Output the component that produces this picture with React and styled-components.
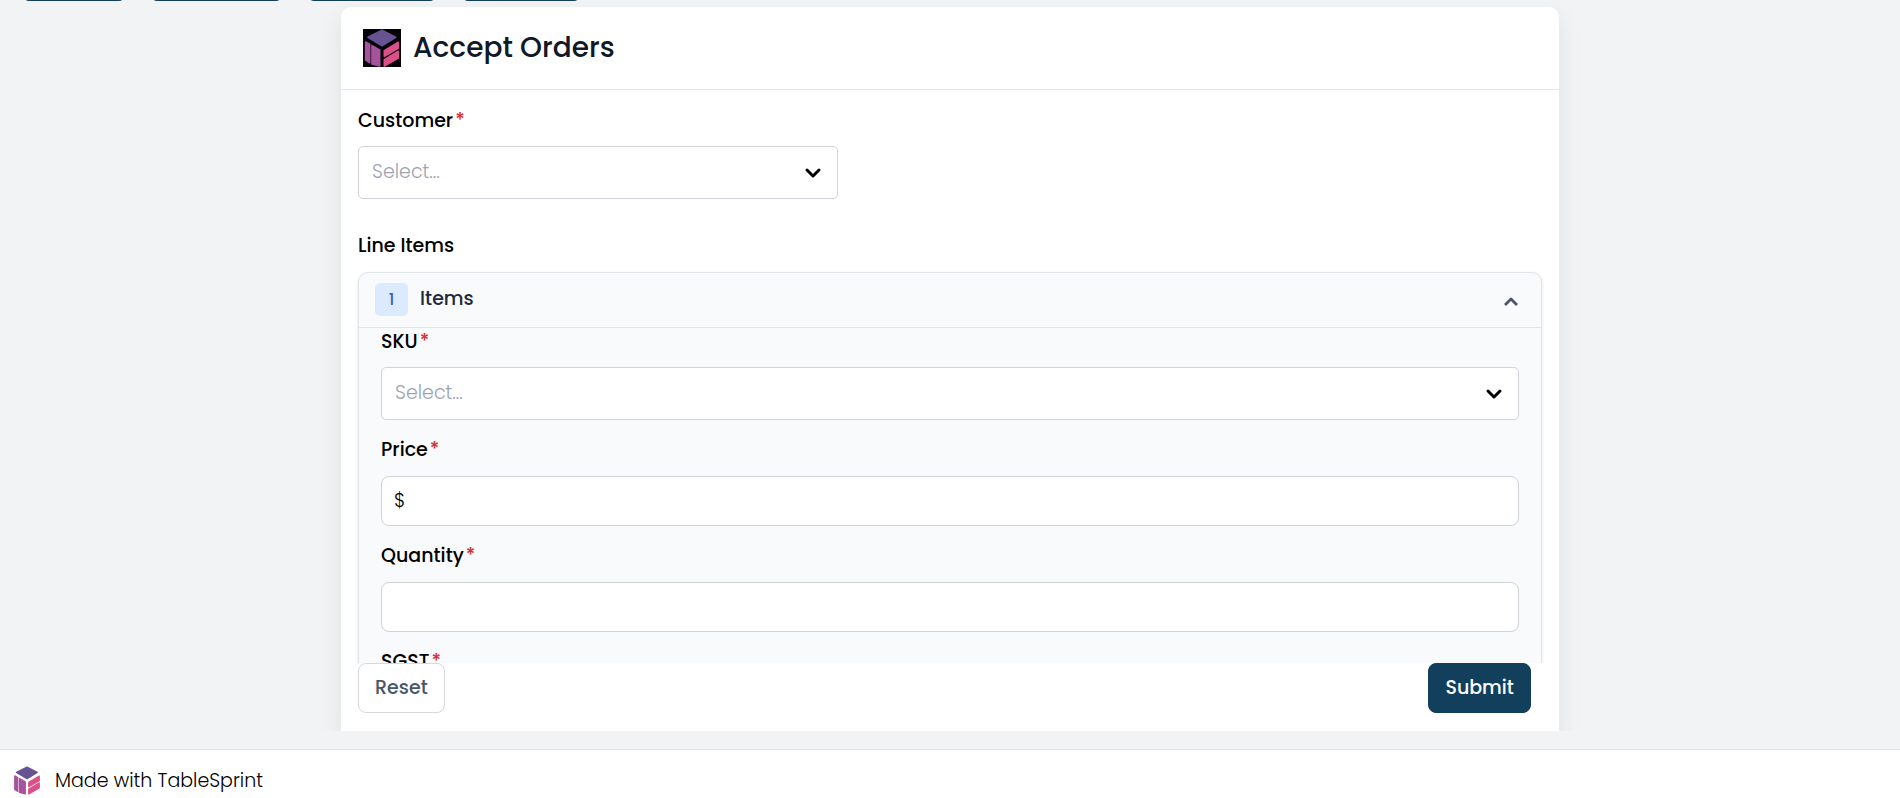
import React, { useState } from "react";
import styled, { createGlobalStyle } from "styled-components";

const GlobalStyle = createGlobalStyle`
  *, *::before, *::after { box-sizing: border-box; }
  body {
    margin: 0;
    background: #f2f3f5;
    color: #000;
    font-family: Poppins, Inter, "Liberation Sans", sans-serif;
    font-size: 19px;
    line-height: 24px;
  }
  button, input, select { font: inherit; }
`;

const Page = styled.div`
  display: flex;
  flex-direction: column;
  height: 100vh;
  overflow: hidden;
`;

const TabStrip = styled.div`
  display: flex;
  flex: none;
  align-items: flex-end;
  gap: 26px;
  height: 1px;
  padding-left: 23px;
  overflow: hidden;
`;

const Tab = styled.span`
  flex: none;
  width: ${(p) => p.$width}px;
  height: 40px;
  border-radius: 6px;
  background: #123f5c;
`;

const Main = styled.main`
  display: flex;
  flex: 1;
  justify-content: center;
  min-height: 0;
  margin-bottom: 18px;
  padding-top: 6px;
  overflow: hidden;
`;

const Card = styled.form`
  display: flex;
  flex-direction: column;
  width: 64.1%;
  background: #fff;
  border-radius: 10px 10px 0 0;
  box-shadow: 0 10px 24px rgba(0, 0, 0, 0.08);
`;

const CardHeader = styled.header`
  display: flex;
  flex: none;
  align-items: center;
  gap: 12px;
  height: 83px;
  padding: 0 22px;
  border-bottom: 1px solid #e5e7eb;
`;

const Title = styled.h1`
  margin: 0;
  color: #111827;
  font-size: 28px;
  font-weight: 500;
  line-height: 36px;
`;

const Scroller = styled.div`
  flex: 1;
  min-height: 0;
  padding: 19px 17px 0;
  overflow: hidden;
`;

const Field = styled.div`
  display: flex;
  flex-direction: column;
  gap: ${(p) => p.$gap}px;
  width: ${(p) => p.$width || "100%"};
`;

const Label = styled.label`
  font-weight: 500;
`;

const SectionTitle = styled.h2`
  margin: 35px 0 14px;
  font-size: 19px;
  font-weight: 500;
  line-height: 24px;
`;

const Star = styled.span`
  margin-left: 2px;
  color: #d32f2f;
`;

const SelectBox = styled.div`
  display: grid;
  align-items: center;

  > * { grid-area: 1 / 1; }
  > svg {
    justify-self: end;
    margin-right: 16px;
    pointer-events: none;
  }
`;

const Select = styled.select`
  width: 100%;
  height: 53px;
  padding: 0 13px 2px;
  border: 1px solid #cfd2d8;
  border-radius: 5px;
  background: #fff;
  color: #9ca3af;
  font-weight: 300;
  appearance: none;
`;

const InputBox = styled.div`
  display: flex;
  align-items: center;
  height: 50px;
  padding: 0 12px;
  border: 1px solid #cfd2d8;
  border-radius: 8px;
  background: #fff;
  font-weight: 300;
`;

const Input = styled.input`
  flex: 1;
  min-width: 0;
  border: 0;
  outline: 0;
  background: transparent;
`;

const Accordion = styled.section`
  border: 1px solid #e2e4e9;
  border-radius: 10px;
  background: #f9fafc;
  box-shadow: 0 1px 3px rgba(0, 0, 0, 0.12);
`;

const AccordionHeader = styled.button`
  display: flex;
  align-items: center;
  width: 100%;
  height: 55px;
  padding: 0 21px 2px 16px;
  border: 0;
  border-bottom: 1px solid #e2e4e9;
  background: transparent;
  color: #1f2937;
  text-align: left;

  > svg { margin-top: 6px; }
`;

const Count = styled.span`
  width: 33px;
  margin-right: 12px;
  border-radius: 5px;
  background: #dbeafe;
  color: #3b5fc4;
  font-size: 16px;
  font-weight: 500;
  line-height: 33px;
  text-align: center;
`;

const AccordionTitle = styled.span`
  flex: 1;
  font-weight: 500;
`;

const AccordionBody = styled.div`
  display: flex;
  flex-direction: column;
  gap: 18px;
  padding: 2px 22px 24px;
`;

const Actions = styled.div`
  display: flex;
  flex: none;
  align-items: flex-start;
  justify-content: space-between;
  height: 68px;
  padding: 0 28px 0 17px;
`;

const Button = styled.button`
  height: 50px;
  padding: 0 16px;
  border: 1px solid ${(p) => (p.$primary ? "#123f5c" : "#d5d8dd")};
  border-radius: 8px;
  background: ${(p) => (p.$primary ? "#123f5c" : "#fff")};
  color: ${(p) => (p.$primary ? "#fff" : "#4b5563")};
  font-weight: 500;
`;

const Footer = styled.footer`
  flex: none;
  height: 49px;
  padding: 16px 14px 0;
  border-top: 1px solid #e2e4e8;
  background: #fff;
`;

const FooterLink = styled.a`
  display: flex;
  align-items: center;
  gap: 15px;
  color: #000;
  font-weight: 300;
  text-decoration: none;
`;

function Cube({ boxed }) {
  return (
    <svg
      width={boxed ? 38 : 26}
      height={boxed ? 38 : 29}
      viewBox={boxed ? "0 0 114 114" : "5 0 104 115"}
      aria-hidden="true"
    >
      {boxed && <rect width="114" height="114" fill="#050208" />}
      <g strokeWidth="5" strokeLinejoin="round">
        <path d="M57 4 98 25 57 50 15 25Z" fill="#675393" stroke="#675393" />
        <path d="M8 39 20 46V101L8 93Z" fill="#a6539c" stroke="#a6539c" />
        <path d="M27 50 50 63V111L27 105Z" fill="#a6539c" stroke="#a6539c" />
        <path d="M64 65 106 40V58L64 82Z" fill="#da5088" stroke="#da5088" />
        <path d="M64 92 106 67V87L64 111Z" fill="#da5088" stroke="#da5088" />
      </g>
    </svg>
  );
}

function Chevron({ up }) {
  return (
    <svg width="18" height="18" viewBox="0 0 18 18" fill="none" aria-hidden="true">
      <path
        d={up ? "M3 12 9 6 15 12" : "M3 6 9 12 15 6"}
        stroke={up ? "#4b5563" : "#000"}
        strokeWidth={up ? 2.8 : 3}
        strokeLinecap={up ? "butt" : "round"}
        strokeLinejoin="round"
      />
    </svg>
  );
}

function FieldLabel({ id, children }) {
  return (
    <Label htmlFor={id}>
      {children}
      <Star>*</Star>
    </Label>
  );
}

function SelectField({ id, label, width }) {
  return (
    <Field $gap={13} $width={width}>
      <FieldLabel id={id}>{label}</FieldLabel>
      <SelectBox>
        <Select id={id} defaultValue="">
          <option value="">Select...</option>
        </Select>
        <Chevron />
      </SelectBox>
    </Field>
  );
}

function TextField({ id, label, prefix }) {
  return (
    <Field $gap={14}>
      <FieldLabel id={id}>{label}</FieldLabel>
      <InputBox>
        {prefix && <span>{prefix}</span>}
        <Input id={id} type="text" inputMode="decimal" />
      </InputBox>
    </Field>
  );
}

export default function App() {
  const [open, setOpen] = useState(true);
  return (
    <Page>
      <GlobalStyle />
      <TabStrip aria-hidden="true">
        {[102, 131, 128, 118].map((width) => (
          <Tab key={width} $width={width} />
        ))}
      </TabStrip>
      <Main>
        <Card onSubmit={(e) => e.preventDefault()}>
          <CardHeader>
            <Cube boxed />
            <Title>Accept Orders</Title>
          </CardHeader>
          <Scroller>
            <SelectField id="customer" label="Customer" width="min(480px, 100%)" />
            <SectionTitle>Line Items</SectionTitle>
            <Accordion>
              <AccordionHeader type="button" aria-expanded={open} onClick={() => setOpen(!open)}>
                <Count>1</Count>
                <AccordionTitle>Items</AccordionTitle>
                <Chevron up={open} />
              </AccordionHeader>
              {open && (
                <AccordionBody>
                  <SelectField id="sku" label="SKU" />
                  <TextField id="price" label="Price" prefix="$" />
                  <TextField id="quantity" label="Quantity" />
                  <TextField id="sgst" label="SGST" />
                </AccordionBody>
              )}
            </Accordion>
          </Scroller>
          <Actions>
            <Button type="reset">Reset</Button>
            <Button type="submit" $primary>Submit</Button>
          </Actions>
        </Card>
      </Main>
      <Footer>
        <FooterLink href="#">
          <Cube />
          Made with TableSprint
        </FooterLink>
      </Footer>
    </Page>
  );
}
